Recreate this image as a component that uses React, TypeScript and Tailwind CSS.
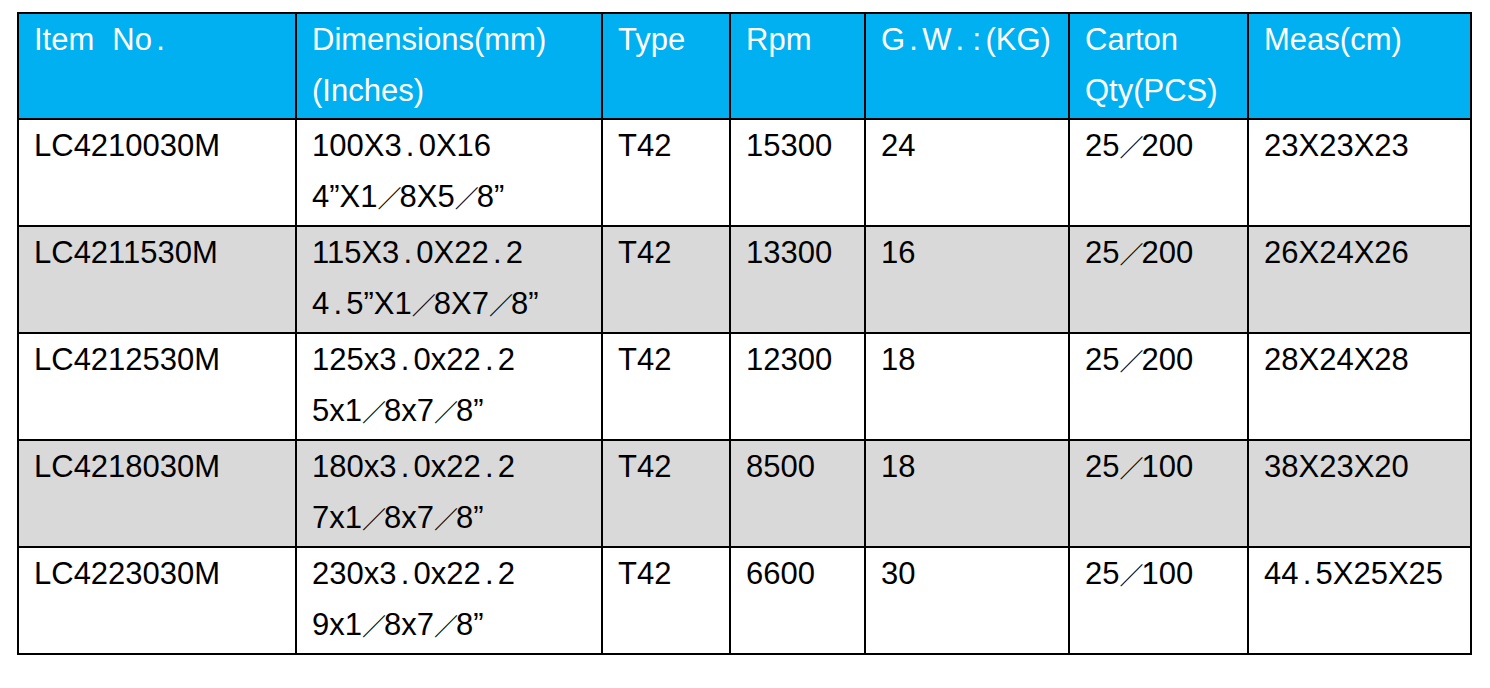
import React from 'react';

type Row = {
  item: string;
  dims: string[];
  type: string;
  rpm: string;
  gw: string;
  qty: string;
  meas: string;
};

const rows: Row[] = [
  { item: 'LC4210030M', dims: ['100X3.0X16', '4”X1/8X5/8”'], type: 'T42', rpm: '15300', gw: '24', qty: '25/200', meas: '23X23X23' },
  { item: 'LC4211530M', dims: ['115X3.0X22.2', '4.5”X1/8X7/8”'], type: 'T42', rpm: '13300', gw: '16', qty: '25/200', meas: '26X24X26' },
  { item: 'LC4212530M', dims: ['125x3.0x22.2', '5x1/8x7/8”'], type: 'T42', rpm: '12300', gw: '18', qty: '25/200', meas: '28X24X28' },
  { item: 'LC4218030M', dims: ['180x3.0x22.2', '7x1/8x7/8”'], type: 'T42', rpm: '8500', gw: '18', qty: '25/100', meas: '38X23X20' },
  { item: 'LC4223030M', dims: ['230x3.0x22.2', '9x1/8x7/8”'], type: 'T42', rpm: '6600', gw: '30', qty: '25/100', meas: '44.5X25X25' },
];

// wide punctuation, like the full-width marks of the source sheet
function Wide({ text }: { text: string }) {
  const parts = text.split(/([./:])/);
  return (
    <>
      {parts.map((p, i) =>
        p === '/' ? (
          <span
            key={i}
            className="inline-block w-[22px] text-center font-['Noto_Sans_CJK_JP',sans-serif] text-[24px]"
          >
            ／
          </span>
        ) : p === '.' || p === ':' ? (
          <span key={i} className="inline-block w-[17px] text-center">{p}</span>
        ) : (
          <React.Fragment key={i}>{p}</React.Fragment>
        )
      )}
    </>
  );
}

const th = 'border-2 border-black px-[15px] pt-0 text-left align-top font-normal text-white';
const td = 'border-2 border-black px-[15px] pt-0 align-top text-black';

export default function App() {
  return (
    <div className="min-h-[688px] bg-white pl-[17px] pt-[12px] font-['Liberation_Sans',Arial,sans-serif] text-[31px] leading-[51px]">
      <table className="w-[1453px] table-fixed border-collapse">
        <colgroup>
          <col className="w-[278px]" />
          <col className="w-[306px]" />
          <col className="w-[128px]" />
          <col className="w-[135px]" />
          <col className="w-[204px]" />
          <col className="w-[179px]" />
          <col className="w-[223px]" />
        </colgroup>
        <thead>
          <tr className="h-[106px] bg-[#00b0f0]">
            <th className={th}>
              Item<span className="inline-block w-[18px]" />No<span className="inline-block w-[17px] text-center">.</span>
            </th>
            <th className={th}>
              Dimensions(mm)
              <br />
              (Inches)
            </th>
            <th className={th}>Type</th>
            <th className={th}>Rpm</th>
            <th className={th}>
              G<Wide text="." />W<Wide text="." /><Wide text=":" />(KG)
            </th>
            <th className={th}>
              Carton
              <br />
              Qty(PCS)
            </th>
            <th className={th}>Meas(cm)</th>
          </tr>
        </thead>
        <tbody>
          {rows.map((r, i) => (
            <tr key={r.item} className={`h-[107px] ${i % 2 === 1 ? 'bg-[#d9d9d9]' : 'bg-white'}`}>
              <td className={td}>{r.item}</td>
              <td className={td}>
                <Wide text={r.dims[0]} />
                <br />
                <Wide text={r.dims[1]} />
              </td>
              <td className={td}>{r.type}</td>
              <td className={td}>{r.rpm}</td>
              <td className={td}>{r.gw}</td>
              <td className={td}>
                <Wide text={r.qty} />
              </td>
              <td className={td}>
                <Wide text={r.meas} />
              </td>
            </tr>
          ))}
        </tbody>
      </table>
    </div>
  );
}
